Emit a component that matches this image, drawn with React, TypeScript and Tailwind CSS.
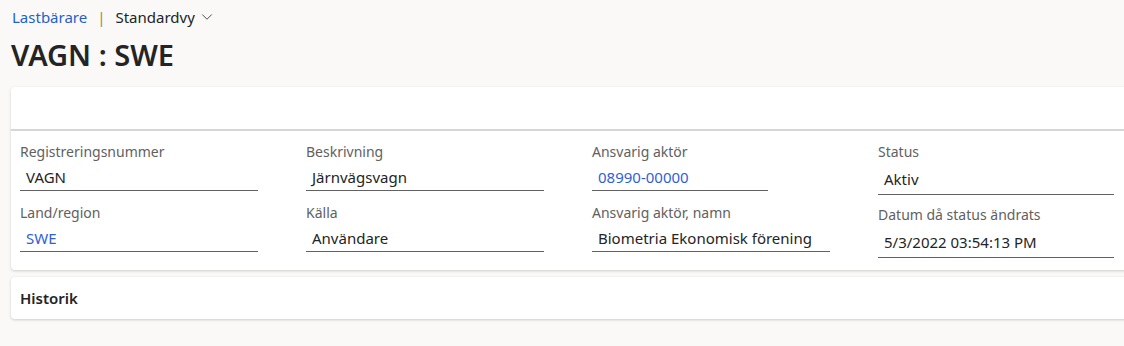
import { ChevronDown } from "lucide-react"

type Field = {
    label: string
    value: string
    link?: boolean
    width?: string
}

const COLUMNS: { fields: Field[]; tall?: boolean }[] = [
    {
        fields: [
            { label: "Registreringsnummer", value: "VAGN" },
            { label: "Land/region", value: "SWE", link: true },
        ],
    },
    {
        fields: [
            { label: "Beskrivning", value: "Järnvägsvagn" },
            { label: "Källa", value: "Användare" },
        ],
    },
    {
        fields: [
            { label: "Ansvarig aktör", value: "08990-00000", link: true, width: "w-[176px]" },
            { label: "Ansvarig aktör, namn", value: "Biometria Ekonomisk förening" },
        ],
    },
    {
        tall: true,
        fields: [
            { label: "Status", value: "Aktiv", width: "w-[236px]" },
            { label: "Datum då status ändrats", value: "5/3/2022 03:54:13 PM", width: "w-[236px]" },
        ],
    },
]

function FieldBox({ field, tall }: { field: Field; tall?: boolean }) {
    return (
        <div className="flex flex-col">
            <div className="h-[20px] flex items-center text-[14px] text-[#616161] leading-none">{field.label}</div>
            <div
                className={`${field.width ?? "w-[238px]"} ${tall ? "h-[33px]" : "h-[29px]"} flex items-center px-[6px] pt-[3px] border-b border-[#616161] text-[15px] leading-none ${
                    field.link ? "text-[#2f5fd8]" : "text-[#242424]"
                }`}
            >
                {field.value}
            </div>
        </div>
    )
}

export default function App() {
    return (
        <div
            className="w-[1124px] h-[346px] overflow-hidden bg-[#faf9f8] pl-[11px]"
            style={{ fontFamily: '"Noto Sans", "Open Sans", sans-serif' }}
        >
            <div className="h-[34px] flex items-center pl-[1px] text-[15px] leading-none">
                <span className="text-[#1f5fcf]">Lastbärare</span>
                <span className="mx-[10px] text-[#a08a4a]">|</span>
                <span className="text-[#242424]">Standardvy</span>
                <ChevronDown className="ml-[3px] w-[18px] h-[18px] text-[#424242]" strokeWidth={1.25} />
            </div>

            <h1 className="h-[45px] flex items-center text-[29px] font-semibold text-[#242424] leading-none pb-[4px]">
                VAGN : SWE
            </h1>

            <div className="mt-[8px] w-[1160px] bg-white rounded-[4px] shadow-[0_1px_3px_rgba(0,0,0,0.18)]">
                <div className="h-[44px] border-b-2 border-[#d6d6d6]" />
                <div className="flex pl-[9px] pt-[11px] pb-[12px]">
                    {COLUMNS.map((col, i) => (
                        <div key={i} className={`w-[286px] shrink-0 flex flex-col ${col.tall ? "gap-[10px]" : "gap-[12px]"}`}>
                            {col.fields.map((f) => (
                                <FieldBox key={f.label} field={f} tall={col.tall} />
                            ))}
                        </div>
                    ))}
                </div>
            </div>

            <div className="mt-[7px] w-[1160px] h-[42px] bg-white rounded-[4px] shadow-[0_1px_3px_rgba(0,0,0,0.18)] flex items-center pl-[9px]">
                <span className="text-[15px] font-semibold text-[#242424]">Historik</span>
            </div>
        </div>
    )
}
